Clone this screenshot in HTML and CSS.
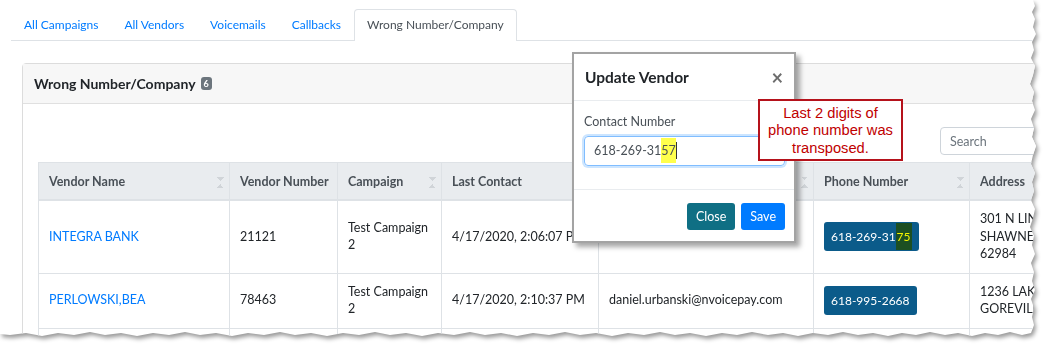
FILE: index.html
```html
<!DOCTYPE html>
<html lang="en">
<head>
    <meta charset="UTF-8">
    <meta name="viewport" content="width=device-width, initial-scale=1.0">
    <title>Wrong Number/Company</title>
    <link rel="stylesheet" href="styles.css">
</head>
<body>
    <div class="shot">
        <div class="sheet">
            <ul class="tabs">
                <li><a href="#">All Campaigns</a></li>
                <li><a href="#">All Vendors</a></li>
                <li><a href="#">Voicemails</a></li>
                <li><a href="#">Callbacks</a></li>
                <li class="active">Wrong Number/Company</li>
            </ul>

            <div class="card">
                <div class="card-header">Wrong Number/Company <span class="badge">6</span></div>
                <div class="card-body">
                    <div class="toolbar">
                        <input type="text" class="search" placeholder="Search">
                    </div>
                    <table class="vendors">
                        <colgroup>
                            <col style="width: 191px">
                            <col style="width: 108px">
                            <col style="width: 104px">
                            <col style="width: 157px">
                            <col style="width: 215px">
                            <col style="width: 156px">
                            <col style="width: 200px">
                        </colgroup>
                        <thead>
                            <tr>
                                <th>Vendor Name <span class="sort"></span></th>
                                <th>Vendor Number</th>
                                <th>Campaign <span class="sort"></span></th>
                                <th>Last Contact</th>
                                <th>Email <span class="sort"></span></th>
                                <th>Phone Number <span class="sort"></span></th>
                                <th>Address</th>
                            </tr>
                        </thead>
                        <tbody>
                            <tr>
                                <td><a href="#">INTEGRA BANK</a></td>
                                <td>21121</td>
                                <td>Test Campaign<br>2</td>
                                <td>4/17/2020, 2:06:07 PM</td>
                                <td></td>
                                <td><span class="phone">618-269-31<mark class="swap">75</mark></span></td>
                                <td>301 N LINCOLN<br>SHAWNEETOWN IL<br>62984</td>
                            </tr>
                            <tr>
                                <td><a href="#">PERLOWSKI,BEA</a></td>
                                <td>78463</td>
                                <td>Test Campaign<br>2</td>
                                <td>4/17/2020, 2:10:37 PM</td>
                                <td>daniel.urbanski@nvoicepay.com</td>
                                <td><span class="phone">618-995-2668</span></td>
                                <td>1236 LAKE RD<br>GOREVILLE IL</td>
                            </tr>
                            <tr>
                                <td>&nbsp;</td>
                                <td></td>
                                <td></td>
                                <td></td>
                                <td></td>
                                <td></td>
                                <td></td>
                            </tr>
                        </tbody>
                    </table>
                </div>
            </div>

            <div class="modal">
                <div class="modal-header">
                    <span class="modal-title">Update Vendor</span>
                    <span class="close">&times;</span>
                </div>
                <div class="modal-body">
                    <label for="contact-number">Contact Number</label>
                    <div class="field" id="contact-number">618-269-31<mark class="typo">57</mark><span class="caret"></span></div>
                </div>
                <div class="modal-footer">
                    <button class="btn btn-close">Close</button>
                    <button class="btn btn-save">Save</button>
                </div>
            </div>

            <div class="callout">Last 2 digits of<br>phone number was<br>transposed.</div>
        </div>
    </div>
</body>
</html>
```

FILE: styles.css
```css
body {
    margin: 0;
    font-family: Lato, "Open Sans", sans-serif;
    font-size: 12px;
    color: #212529;
    background: #fff;
}

a {
    color: #007bff;
    text-decoration: none;
}

.shot {
    width: 1045px;
    height: 346px;
    filter: drop-shadow(2px 3px 2px rgba(0, 0, 0, 0.4));
}

/* torn paper edge on the right and bottom */
.sheet {
    position: relative;
    width: 1036px;
    height: 337px;
    box-sizing: border-box;
    padding: 9px 0 0 11px;
    overflow: hidden;
    background: #fff;
    clip-path: polygon(0 0, 1033px 0, 1035px 6px, 1032px 12px, 1035px 19px, 1033px 27px, 1036px 34px, 1032px 42px, 1034px 50px, 1031px 58px, 1035px 66px, 1033px 75px, 1030px 84px, 1034px 92px, 1032px 101px, 1035px 110px, 1031px 119px, 1034px 128px, 1032px 137px, 1036px 146px, 1033px 155px, 1031px 164px, 1035px 173px, 1032px 182px, 1034px 191px, 1031px 200px, 1035px 209px, 1033px 218px, 1030px 227px, 1034px 236px, 1032px 245px, 1035px 254px, 1031px 263px, 1034px 272px, 1032px 281px, 1035px 290px, 1031px 299px, 1034px 308px, 1032px 317px, 1034px 325px, 1031px 333px, 1022px 335px, 1010px 332px, 998px 335px, 985px 333px, 972px 336px, 958px 333px, 945px 335px, 930px 332px, 916px 335px, 902px 333px, 888px 336px, 873px 333px, 858px 335px, 843px 332px, 828px 335px, 813px 333px, 798px 336px, 783px 333px, 768px 335px, 752px 332px, 737px 335px, 722px 333px, 706px 336px, 690px 333px, 675px 335px, 660px 332px, 644px 335px, 628px 333px, 612px 336px, 596px 333px, 580px 335px, 565px 332px, 549px 335px, 533px 333px, 517px 336px, 501px 333px, 485px 335px, 470px 332px, 454px 335px, 438px 333px, 422px 336px, 406px 333px, 390px 335px, 375px 332px, 359px 335px, 343px 333px, 327px 336px, 311px 333px, 295px 335px, 280px 332px, 264px 335px, 248px 333px, 232px 336px, 216px 333px, 200px 335px, 185px 332px, 169px 335px, 153px 333px, 137px 336px, 121px 333px, 105px 335px, 90px 332px, 74px 335px, 58px 333px, 42px 336px, 26px 333px, 10px 335px, 0 334px);
}

.tabs {
    display: flex;
    list-style: none;
    margin: 0;
    padding: 0;
    border-bottom: 1px solid #dee2e6;
}

.tabs li {
    padding: 6px 12px 7px;
    line-height: 17px;
    font-size: 12px;
    border: 1px solid transparent;
    border-bottom: none;
    border-radius: 4px 4px 0 0;
    margin-bottom: -1px;
}

.tabs li.active {
    color: #495057;
    background: #fff;
    border-color: #dee2e6;
    padding-bottom: 8px;
}

.card {
    width: 1200px;
    margin: 22px 0 0 11px;
    border: 1px solid #dcdcdc;
    border-radius: 4px;
}

.card-header {
    display: flex;
    align-items: center;
    height: 39px;
    padding: 0 11px;
    background: #f7f7f7;
    border-bottom: 1px solid #e0e0e0;
    font-size: 14px;
    font-weight: 700;
}

.badge {
    margin-left: 5px;
    padding: 1px 3px;
    font-size: 9px;
    line-height: 11px;
    color: #fff;
    background: #6c757d;
    border-radius: 3px;
}

.card-body {
    padding: 23px 15px 0;
}

.toolbar {
    display: flex;
    justify-content: flex-end;
    margin-bottom: 7px;
}

.search {
    width: 268px;
    height: 28px;
    box-sizing: border-box;
    padding: 0 9px;
    font-family: inherit;
    font-size: 12.5px;
    border: 1px solid #ced4da;
    border-radius: 4px;
}

.search::placeholder {
    color: #6c757d;
}

.vendors {
    border-collapse: collapse;
    table-layout: fixed;
    width: 1131px;
}

.vendors th {
    height: 36px;
    padding: 0 8px 0 10px;
    text-align: left;
    font-weight: 700;
    font-size: 12.5px;
    color: #495057;
    background: #e9ecef;
    border: 1px solid #dee2e6;
    border-bottom-width: 2px;
    white-space: nowrap;
}

.vendors td {
    padding: 9px 10px 10px;
    line-height: 17.5px;
    font-size: 12.5px;
    border: 1px solid #dee2e6;
    vertical-align: middle;
    white-space: nowrap;
}

.sort {
    float: right;
    width: 7px;
    height: 11px;
    margin: 3px -3px 0 0;
    background:
        linear-gradient(to top right, transparent 50%, #d0d4d8 50%) left top / 4px 4px no-repeat,
        linear-gradient(to top left, transparent 50%, #d0d4d8 50%) right top / 4px 4px no-repeat,
        linear-gradient(to bottom right, transparent 50%, #d0d4d8 50%) left bottom / 4px 4px no-repeat,
        linear-gradient(to bottom left, transparent 50%, #d0d4d8 50%) right bottom / 4px 4px no-repeat;
}

.phone {
    display: inline-block;
    height: 29px;
    line-height: 29px;
    padding: 0 7px;
    font-size: 12px;
    color: #fff;
    background: #0b5b8a;
    border-radius: 3px;
}

.swap {
    padding: 6px 1px;
    color: #f2f200;
    background: #1c4f22;
}

/* overlay dialog */
.modal {
    position: absolute;
    left: 572px;
    top: 52px;
    width: 224px;
    height: 191px;
    box-sizing: border-box;
    background: #fff;
    border: 2px solid #a3a3a3;
    box-shadow: 4px 4px 5px rgba(0, 0, 0, 0.35);
}

.modal-header {
    display: flex;
    justify-content: space-between;
    align-items: center;
    height: 46px;
    padding: 0 11px;
    border-bottom: 1px solid #e9ecef;
}

.modal-title {
    font-size: 15.5px;
    font-weight: 700;
}

.close {
    font-size: 20px;
    color: #6d6d6d;
    font-weight: 700;
}

.modal-body {
    padding: 12px 9px 23px 10px;
    border-bottom: 1px solid #e9ecef;
}

.modal-body label {
    display: block;
    margin-bottom: 6px;
    line-height: 17px;
    font-size: 12.5px;
    color: #495057;
}

.field {
    height: 30px;
    box-sizing: border-box;
    line-height: 28px;
    padding: 0 9px;
    font-size: 12.5px;
    color: #495057;
    border: 1px solid #80bdff;
    border-radius: 4px;
    box-shadow: 0 0 0 2px rgba(0, 123, 255, 0.2);
}

.typo {
    padding: 5px 0;
    color: #495057;
    background: #ffff4d;
}

.caret {
    display: inline-block;
    width: 1px;
    height: 17px;
    vertical-align: -4px;
    background: #333;
}

.modal-footer {
    display: flex;
    justify-content: flex-end;
    gap: 6px;
    padding: 13px 9px 0;
}

.btn {
    height: 27px;
    padding: 0 9px;
    font-family: inherit;
    font-size: 12.5px;
    color: #fff;
    border: none;
    border-radius: 3px;
}

.btn-close {
    background: #0f6f84;
}

.btn-save {
    background: #007bff;
}

.callout {
    position: absolute;
    left: 758px;
    top: 99px;
    width: 145px;
    height: 62px;
    box-sizing: border-box;
    padding-top: 4px;
    font-family: "Liberation Sans", Arial, sans-serif;
    font-size: 14.7px;
    line-height: 17.3px;
    text-align: center;
    color: #c00000;
    background: #fff;
    border: 2px solid #b5121b;
}
```
